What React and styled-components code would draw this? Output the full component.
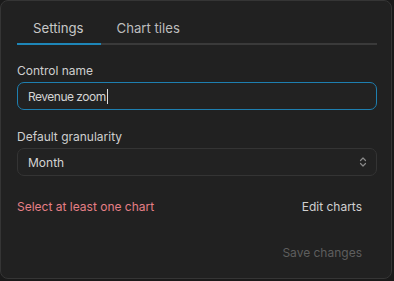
import React from 'react'
import styled, { createGlobalStyle } from "styled-components"

const Global = createGlobalStyle`
html, body {
    margin: 0;
    padding: 0;
    background: #1a1a1a;
    font-family: Inter, "Noto Sans", sans-serif;
}
`

const App = () => {
    return (
        <>
            <Global/>
            <Card>
                <Tabs>
                    <Tab active>Settings</Tab>
                    <Tab>Chart tiles</Tab>
                </Tabs>
                <Field>
                    <Label>Control name</Label>
                    <Input focused>
                        <Value tight>Revenue zoom</Value><Caret/>
                    </Input>
                </Field>
                <Field>
                    <Label>Default granularity</Label>
                    <Input>
                        <Value>Month</Value>
                        <Chevron viewBox="0 0 10 12">
                            <path d="M2.5 4.5 L5 2 L7.5 4.5 M2.5 7.5 L5 10 L7.5 7.5" fill="none" stroke="#8a8a8a" strokeWidth="1.2" strokeLinecap="round" strokeLinejoin="round"/>
                        </Chevron>
                    </Input>
                </Field>
                <Row>
                    <Error>Select at least one chart</Error>
                    <TextButton>Edit charts</TextButton>
                </Row>
                <Footer>
                    <TextButton disabled>Save changes</TextButton>
                </Footer>
            </Card>
        </>
    )
}

export default App

const Card = styled.div`
box-sizing: border-box;
width: 392px;
height: 279px;
background-color: #212121;
border: 1px solid #353535;
border-radius: 8px;
padding: 9px 14px 0 16px;
display: flex;
flex-direction: column;
`

const Tabs = styled.div`
display: flex;
border-bottom: 2px solid #3a3a3a;
margin-bottom: 18px;
`

const Tab = styled.div`
font-size: 13.2px;
color: ${p => p.active ? "#c8c8c8" : "#bdbdbd"};
padding: 10px 17px 7px 16px;
margin-bottom: -2px;
border-bottom: 2px solid ${p => p.active ? "#1e86b8" : "transparent"};
`

const Field = styled.div`
display: flex;
flex-direction: column;
gap: 4px;
margin-bottom: 19px;
`

const Label = styled.div`
font-size: 12px;
color: #cfcfcf;
line-height: 15px;
`

const Input = styled.div`
box-sizing: border-box;
height: 28px;
display: flex;
align-items: center;
padding: 0 10px;
border: 1px solid ${p => p.focused ? "#1e7fb0" : "#343434"};
border-radius: 7px;
background-color: #222;
`

const Value = styled.span`
font-size: 12px;
letter-spacing: ${p => p.tight ? "-0.5px" : "0"};
color: #d4d4d4;
`

const Caret = styled.span`
width: 1px;
height: 15px;
background-color: #e0e0e0;
margin-left: 1px;
`

const Chevron = styled.svg`
width: 10px;
height: 12px;
margin-left: auto;
margin-right: -2px;
`

const Row = styled.div`
display: flex;
align-items: center;
justify-content: space-between;
margin-top: 4px;
line-height: 15px;
`

const Error = styled.div`
font-size: 12px;
color: #e57f86;
`

const TextButton = styled.div`
font-size: 12px;
line-height: 15px;
color: ${p => p.disabled ? "#5e5e5e" : "#d0d0d0"};
padding: 0 15px 0 0;
`

const Footer = styled.div`
display: flex;
justify-content: flex-end;
margin-top: 31px;
`
